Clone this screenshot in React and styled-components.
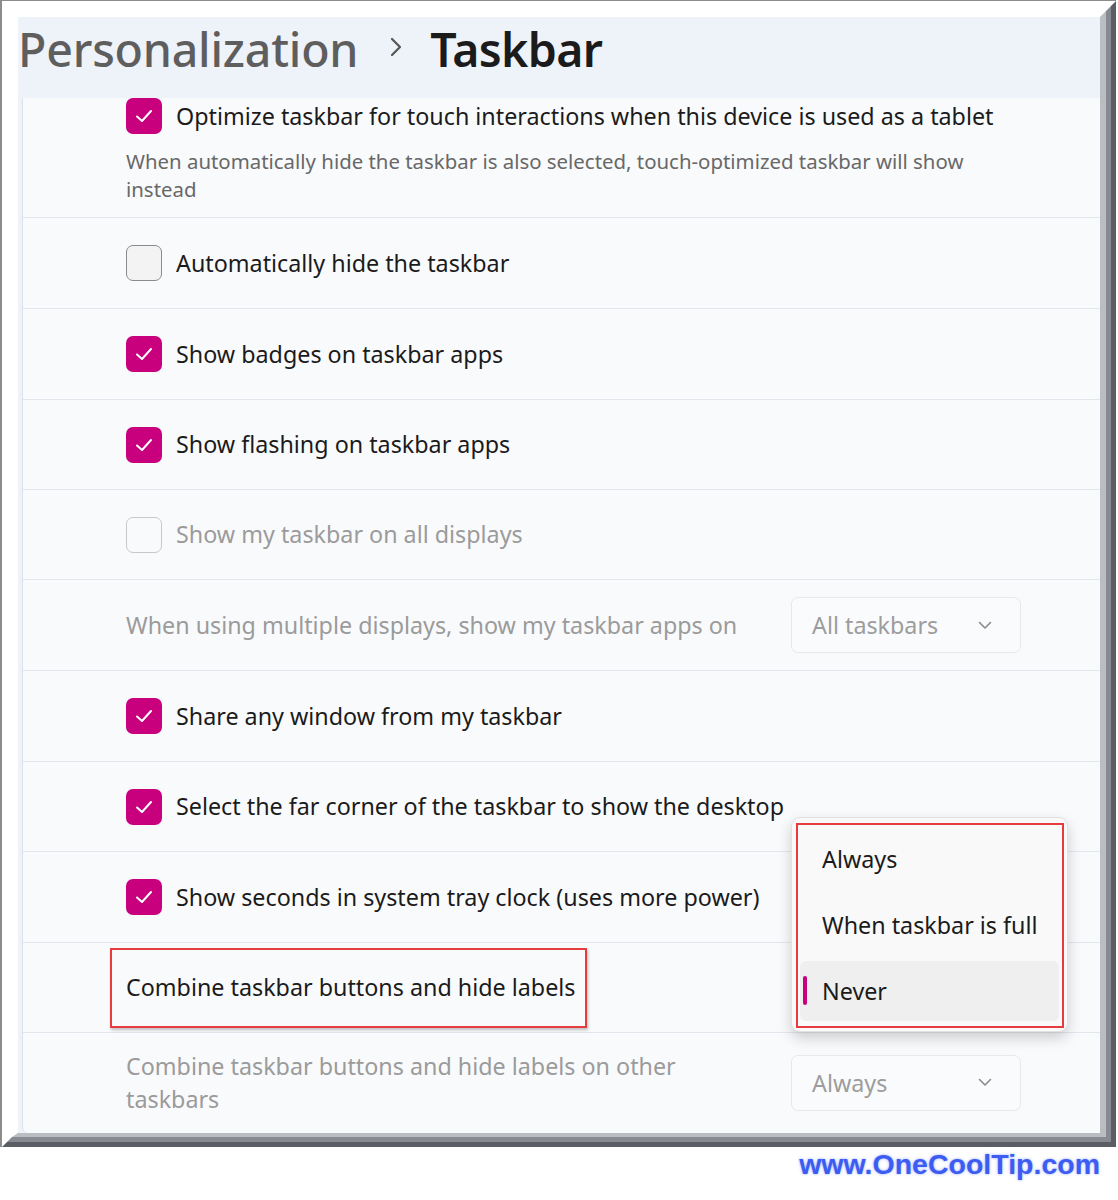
import React from "react";
import styled, { createGlobalStyle } from "styled-components";

const Global = createGlobalStyle`
  html, body { margin: 0; padding: 0; background: #ffffff; }
  body { font-family: "Noto Sans", "Open Sans", sans-serif; }
  * { box-sizing: border-box; }
`;

const Page = styled.div`
  width: 1118px;
  height: 1200px;
  background: #ffffff;
`;

const Frame = styled.div`
  width: 1116px;
  border-top: 1px solid #8c8c8c;
  border-left: 2px solid #8c8c8c;
`;

const Bevel = styled.div`
  border-style: solid;
  border-color: #ffffff ${(p) => p.$c} ${(p) => p.$c} #ffffff;
  border-width: ${(p) => `${p.$t}px ${p.$r}px ${p.$b}px ${p.$l}px`};
`;

const Window = styled.div`
  background: #eef2f9;
  height: 1116px;
  display: flex;
  flex-direction: column;
  overflow: hidden;
`;

const Header = styled.div`
  height: 81px;
  display: flex;
  align-items: flex-start;
  flex-shrink: 0;
`;

const Crumb = styled.span`
  font-size: 46.5px;
  line-height: 64px;
  font-weight: ${(p) => (p.$current ? 600 : 500)};
  color: ${(p) => (p.$current ? "#1b1b1b" : "#5e5e5e")};
  letter-spacing: ${(p) => (p.$current ? "-0.7px" : "-0.2px")};
`;

const CrumbSep = styled.span`
  display: flex;
  align-items: center;
  height: 60px;
  margin: 0 28px 0 32px;
`;

const Card = styled.div`
  flex: 1;
  margin-left: 4px;
  background: #f9fafc;
  border-left: 1px solid #dbe2ea;
  border-bottom-left-radius: 6px;
  position: relative;
`;

const Row = styled.div`
  height: ${(p) => p.$h}px;
  border-bottom: ${(p) => (p.$last ? "none" : "1.5px solid #e3e7ed")};
  display: flex;
  align-items: ${(p) => (p.$top ? "flex-start" : "center")};
  padding: 0 79px 0 103px;
  position: relative;
`;

const Stack = styled.div`
  display: flex;
  flex-direction: column;
`;

const CheckLine = styled.div`
  display: flex;
  align-items: center;
  gap: 14px;
`;

const Box = styled.span`
  width: 36px;
  height: 36px;
  border-radius: 7px;
  flex-shrink: 0;
  display: flex;
  align-items: center;
  justify-content: center;
  background: ${(p) => (p.$checked ? "#c8007d" : p.$disabled ? "transparent" : "#f3f3f4")};
  border: ${(p) =>
    p.$checked ? "none" : p.$disabled ? "1.5px solid #c9c9c9" : "1.5px solid #8b8b8b"};
`;

const Label = styled.span`
  font-size: 23.3px;
  line-height: 33px;
  color: ${(p) => (p.$disabled ? "#9b9b9b" : "#1b1b1b")};
  white-space: nowrap;
`;

const Desc = styled.div`
  font-size: 20.4px;
  line-height: 28px;
  color: #686868;
  margin-top: 13px;
`;

const Select = styled.div`
  margin-left: auto;
  width: 230px;
  height: 56px;
  border: 1.5px solid #e6e8eb;
  border-radius: 7px;
  background: #fafbfc;
  display: flex;
  align-items: center;
  justify-content: space-between;
  padding: 0 28px 0 20px;
  font-size: 23.3px;
  color: #9d9d9d;
  flex-shrink: 0;
`;

const Highlight = styled.div`
  display: flex;
  align-items: center;
  height: 80px;
  margin-left: -16px;
  padding: 0 10px 0 14px;
  border: 2px solid #e63b40;
  box-shadow: 1px 2px 3px rgba(0, 0, 0, 0.25);
`;

const Menu = styled.div`
  position: absolute;
  left: 768px;
  top: 719px;
  width: 277px;
  padding: 11px 8px 10px 8px;
  background: #f9f9f9;
  border: 1px solid #e2e2e2;
  border-radius: 9px;
  box-shadow: 0 6px 14px rgba(0, 0, 0, 0.18);
  display: flex;
  flex-direction: column;
  gap: 6px;
  z-index: 5;
`;

const MenuMark = styled.div`
  position: absolute;
  left: 4px;
  top: 5px;
  right: 3px;
  bottom: 3px;
  border: 2px solid #e63b40;
  pointer-events: none;
`;

const MenuItem = styled.div`
  height: 60px;
  border-radius: 6px;
  display: flex;
  align-items: center;
  padding-left: 22px;
  font-size: 23.3px;
  color: #1b1b1b;
  position: relative;
  background: ${(p) => (p.$selected ? "#efefef" : "transparent")};
`;

const Pill = styled.span`
  position: absolute;
  left: 3px;
  top: 15px;
  width: 4px;
  height: 29px;
  border-radius: 2px;
  background: #c8007d;
`;

const Watermark = styled.div`
  display: flex;
  justify-content: flex-end;
  padding-right: 18px;
  margin-top: 1px;
  font-family: "Liberation Sans", Arial, sans-serif;
  font-weight: 700;
  font-size: 28.5px;
  color: #3c5cf2;
  text-shadow: 0 0 3px rgba(70, 100, 255, 0.55);
`;

const Check = () => (
  <svg width="20" height="16" viewBox="0 0 20 16">
    <polyline points="3,8.5 8,13 17,3" fill="none" stroke="#ffffff" strokeWidth="2" strokeLinecap="round" strokeLinejoin="round" />
  </svg>
);

const Chevron = ({ color = "#8a8a8a" }) => (
  <svg width="14" height="9" viewBox="0 0 14 9">
    <polyline points="1.5,1.5 7,7 12.5,1.5" fill="none" stroke={color} strokeWidth="1.6" strokeLinecap="round" strokeLinejoin="round" />
  </svg>
);

const CheckRow = ({ checked, disabled, children }) => (
  <CheckLine>
    <Box $checked={checked} $disabled={disabled}>{checked && <Check />}</Box>
    <Label $disabled={disabled}>{children}</Label>
  </CheckLine>
);

export default function App() {
  return (
    <Page>
      <Global />
      <Frame>
        <Bevel $t={5} $r={5} $b={5} $l={5} $c="#5a5d63">
          <Bevel $t={5} $r={5} $b={5} $l={5} $c="#878a90">
            <Bevel $t={6} $r={6} $b={4} $l={6} $c="#babdc2">
              <Window>
                <Header>
                  <Crumb>Personalization</Crumb>
                  <CrumbSep>
                    <svg width="12" height="20" viewBox="0 0 12 20">
                      <polyline points="2,2 10,10 2,18" fill="none" stroke="#555" strokeWidth="2.2" strokeLinecap="round" strokeLinejoin="round" />
                    </svg>
                  </CrumbSep>
                  <Crumb $current>Taskbar</Crumb>
                </Header>
                <Card>
                  <Row $h={120} $top>
                    <Stack>
                      <CheckRow checked>Optimize taskbar for touch interactions when this device is used as a tablet</CheckRow>
                      <Desc>
                        When automatically hide the taskbar is also selected, touch-optimized taskbar will show
                        <br />
                        instead
                      </Desc>
                    </Stack>
                  </Row>
                  <Row $h={91}>
                    <CheckRow>Automatically hide the taskbar</CheckRow>
                  </Row>
                  <Row $h={91}>
                    <CheckRow checked>Show badges on taskbar apps</CheckRow>
                  </Row>
                  <Row $h={90}>
                    <CheckRow checked>Show flashing on taskbar apps</CheckRow>
                  </Row>
                  <Row $h={90}>
                    <CheckRow disabled>Show my taskbar on all displays</CheckRow>
                  </Row>
                  <Row $h={91}>
                    <Label $disabled>When using multiple displays, show my taskbar apps on</Label>
                    <Select>
                      All taskbars
                      <Chevron />
                    </Select>
                  </Row>
                  <Row $h={91}>
                    <CheckRow checked>Share any window from my taskbar</CheckRow>
                  </Row>
                  <Row $h={90}>
                    <CheckRow checked>Select the far corner of the taskbar to show the desktop</CheckRow>
                  </Row>
                  <Row $h={91}>
                    <CheckRow checked>Show seconds in system tray clock (uses more power)</CheckRow>
                  </Row>
                  <Row $h={90}>
                    <Highlight>
                      <Label>Combine taskbar buttons and hide labels</Label>
                    </Highlight>
                  </Row>
                  <Row $h={99} $last>
                    <Label $disabled>
                      Combine taskbar buttons and hide labels on other
                      <br />
                      taskbars
                    </Label>
                    <Select>
                      Always
                      <Chevron />
                    </Select>
                  </Row>
                  <Menu>
                    <MenuItem>Always</MenuItem>
                    <MenuItem>When taskbar is full</MenuItem>
                    <MenuItem $selected>
                      <Pill />
                      Never
                    </MenuItem>
                    <MenuMark />
                  </Menu>
                </Card>
              </Window>
            </Bevel>
          </Bevel>
        </Bevel>
      </Frame>
      <Watermark>www.OneCoolTip.com</Watermark>
    </Page>
  );
}
